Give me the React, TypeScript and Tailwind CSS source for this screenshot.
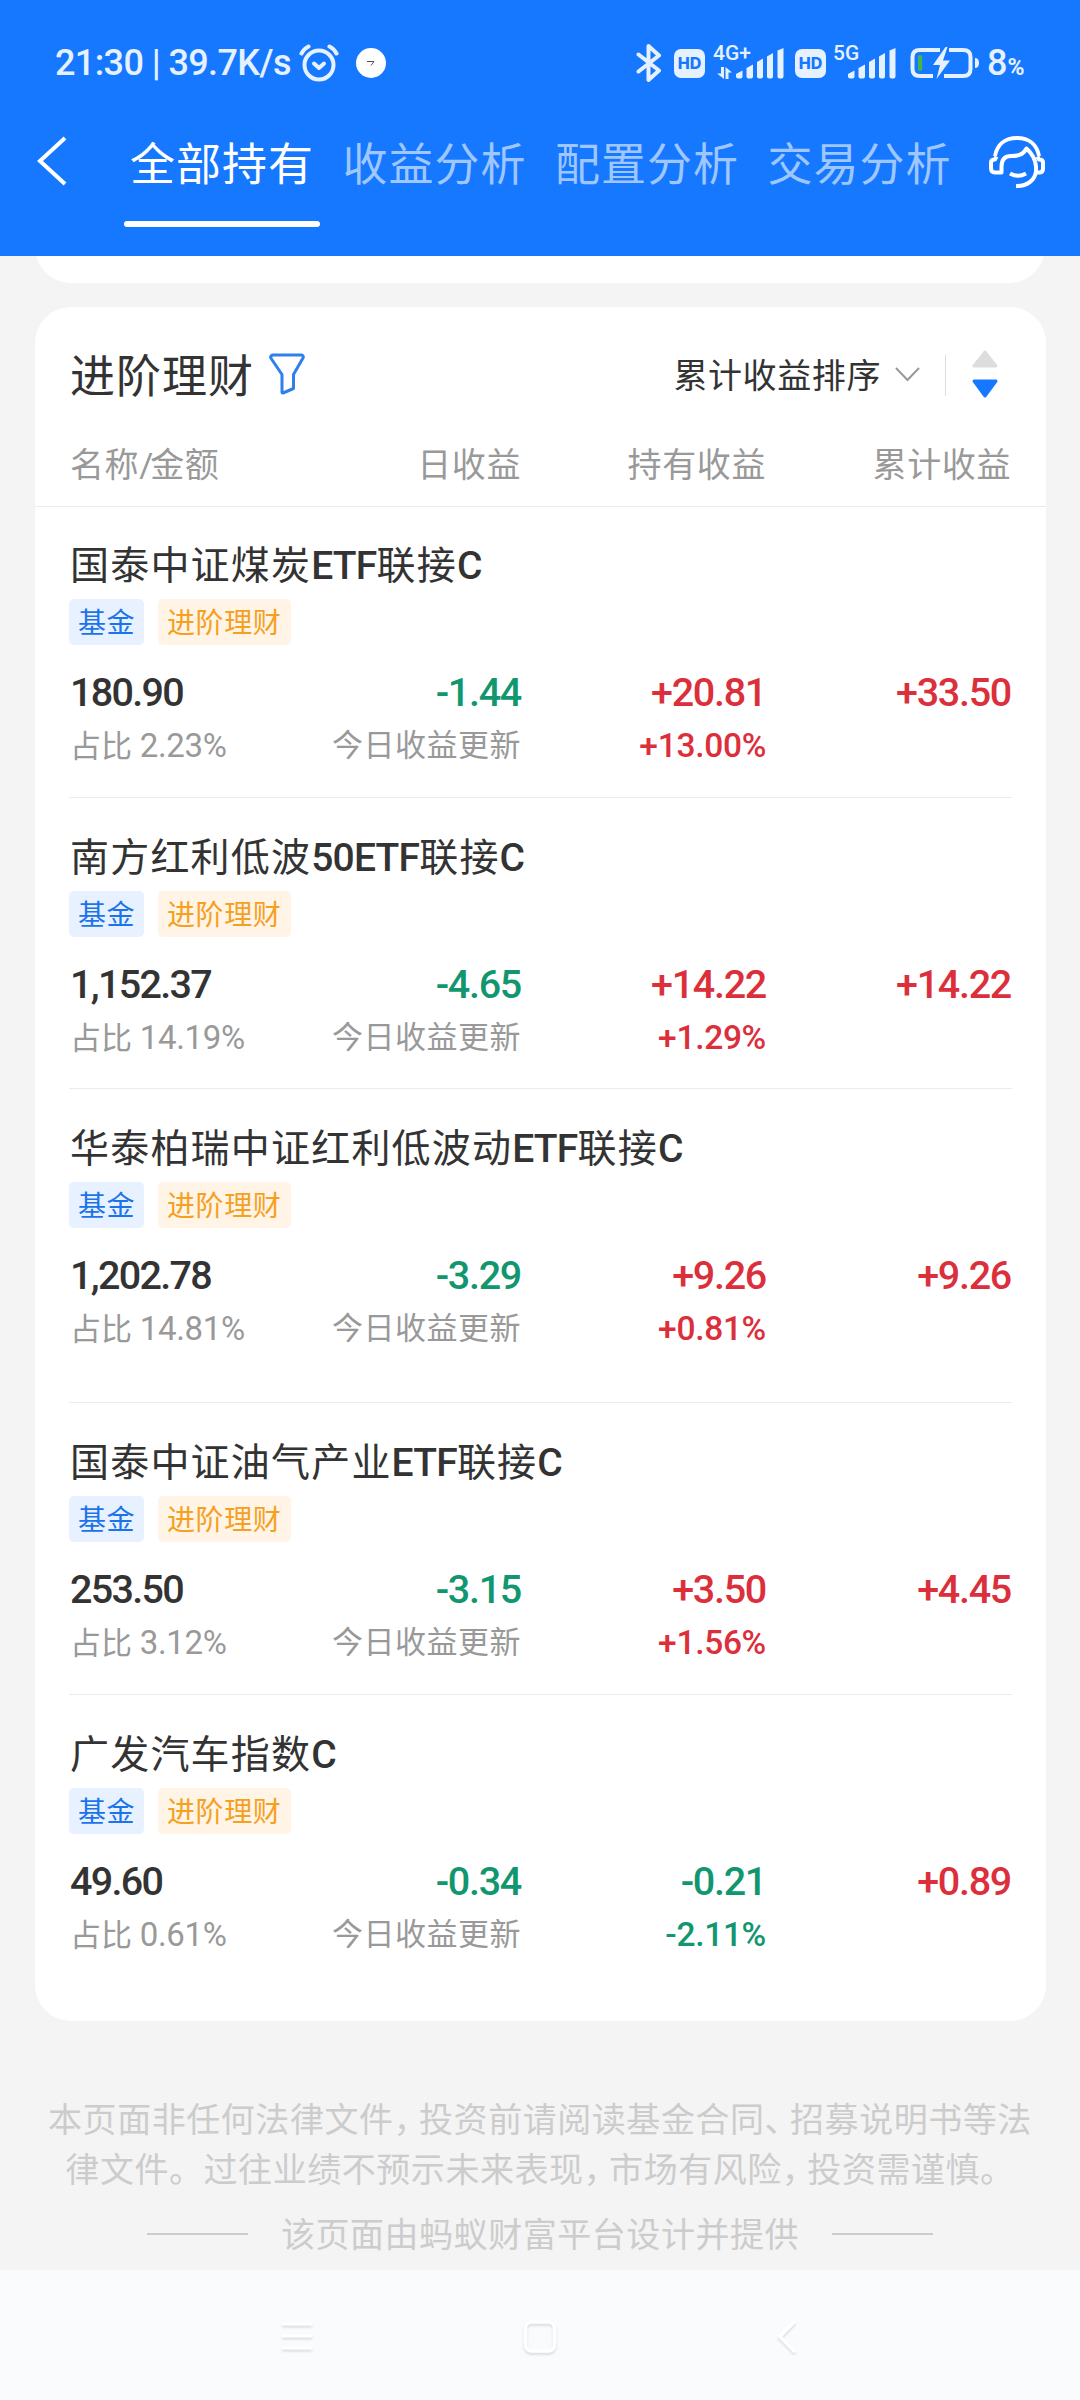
import React from "react";

const FONT = "font-['Roboto','Noto_Sans_CJK_SC',sans-serif]";

const tabs = ["全部持有", "收益分析", "配置分析", "交易分析"];

const funds = [
  {
    name: "国泰中证煤炭ETF联接C",
    amount: "180.90",
    ratio: "2.23%",
    daily: "-1.44",
    holding: "+20.81",
    holdingRate: "+13.00%",
    total: "+33.50",
    height: "h-[292px]",
  },
  {
    name: "南方红利低波50ETF联接C",
    amount: "1,152.37",
    ratio: "14.19%",
    daily: "-4.65",
    holding: "+14.22",
    holdingRate: "+1.29%",
    total: "+14.22",
    height: "h-[291px]",
  },
  {
    name: "华泰柏瑞中证红利低波动ETF联接C",
    amount: "1,202.78",
    ratio: "14.81%",
    daily: "-3.29",
    holding: "+9.26",
    holdingRate: "+0.81%",
    total: "+9.26",
    height: "h-[314px]",
  },
  {
    name: "国泰中证油气产业ETF联接C",
    amount: "253.50",
    ratio: "3.12%",
    daily: "-3.15",
    holding: "+3.50",
    holdingRate: "+1.56%",
    total: "+4.45",
    height: "h-[292px]",
  },
  {
    name: "广发汽车指数C",
    amount: "49.60",
    ratio: "0.61%",
    daily: "-0.34",
    holding: "-0.21",
    holdingRate: "-2.11%",
    total: "+0.89",
    height: "h-[325px]",
  },
];

type Fund = (typeof funds)[number];

const colorOf = (value: string) => (value.startsWith("-") ? "text-[#11966f]" : "text-[#dc2f3c]");

// Latin letters and digits sit tighter and heavier than the Chinese characters
const MixedName = ({ text }: { text: string }) => (
  <>
    {text.split(/([A-Z0-9]+)/).map((part, i) =>
      i % 2 ? (
        <span key={i} className="font-medium tracking-[-0.8px]">
          {part}
        </span>
      ) : (
        part
      ),
    )}
  </>
);

// commas take less than a full character cell
const Compact = ({ text }: { text: string }) => (
  <>
    {text.split(/([，、])/).map((part, i) =>
      i % 2 ? (
        <span key={i} className="tracking-[-8.5px]">
          {part}
        </span>
      ) : (
        part
      ),
    )}
  </>
);

const AlarmIcon = () => (
  <svg width="40" height="38" viewBox="0 0 40 38" fill="none" stroke="#e6f1ff" strokeLinecap="round">
    <circle cx="20" cy="21" r="14.5" strokeWidth="4" />
    <path d="M15 19.5l5 4.5 5-4.5" strokeWidth="4" strokeLinejoin="round" />
    <path d="M2.5 9.5C4 6.5 6.5 4 9.5 2.5M37.500 9.500C36 6.500 33.500 4 30.500 2.500" strokeWidth="4" />
  </svg>
);

const BluetoothIcon = () => (
  <svg width="26" height="40" viewBox="0 0 26 40" fill="none" stroke="#e6f1ff" strokeWidth="4">
    <path d="M2.5 11.500L23 27.500 12.500 37V3L23 12.500 2.500 28.500" strokeLinejoin="round" strokeLinecap="round" />
  </svg>
);

const HdBadge = () => (
  <div className="flex h-[29px] w-[31px] items-center justify-center rounded-[7px] bg-[#e6f1ff] font-['Inter',sans-serif] text-[16px] leading-none font-extrabold text-[#1677ff]">
    HD
  </div>
);

const SignalBars = () => (
  <svg width="48" height="31" viewBox="0 0 48 31" fill="#e6f1ff">
    <path d="M0 26l6.5-3.5v6q0 2-2 2H2q-2 0-2-2z" />
    <path d="M10.500 20l6.500-3.500v12q0 2-2 2h-2.500q-2 0-2-2z" />
    <path d="M21 14l6-3.500v18q0 2-2 2h-2q-2 0-2-2z" />
    <path d="M31 8.500l6-3.500v23.500q0 2-2 2h-2q-2 0-2-2z" />
    <path d="M41.500 2.500l6-2.500v28.500q0 2-2 2h-2q-2 0-2-2z" />
  </svg>
);

const BatteryIcon = () => (
  <svg width="69" height="32" viewBox="0 0 69 32" fill="none">
    <path d="M30 3H10Q2.500 3 2.500 10v12Q2.500 29 10 29h13M39 3h14q7.500 0 7.500 7v12q0 7-7.500 7H34" stroke="#e6f1ff" strokeWidth="4" />
    <rect x="8" y="8" width="4.200" height="16" rx="2" fill="#43b649" />
    <path d="M35.500 0L23 18h7l-3.500 14L40 13.500h-7L37.500 0z" fill="#e6f1ff" />
    <path d="M65 11q4 0 4 5t-4 5z" fill="#e6f1ff" />
  </svg>
);

const ServiceIcon = () => (
  <svg width="58" height="54" viewBox="0 0 58 54" fill="none" stroke="#fff" strokeWidth="4">
    <path d="M7 21C9 9.500 17 3 29 3s20 6.500 22 18" />
    <path d="M8.500 21.500L7 24.500Q3 24.500 3 27.500V33q0 4.500 4 4.500h6.500V32C13.500 24 17 21 23 21c7 0 12-1 15.500-7.500 5.500 5 9 11 9.500 18v6h3.500q3.500 0 3.500-4v-6q0-3-4-3l-1.500-3" strokeLinejoin="round" />
    <path d="M22 38.500q8 4.500 16 0" />
    <path d="M48 36.500c-1 8-8 15-20 14.500" />
  </svg>
);

const StatusBar = () => (
  <div className="flex h-[126px] items-center pl-[55px] text-[#e6f1ff]">
    <span className="w-[240px] text-[36px] leading-none font-medium tracking-[-0.6px] whitespace-nowrap">
      21:30 | 39.7K/s
    </span>
    <div className="ml-[4px]">
      <AlarmIcon />
    </div>
    <div className="ml-[17px] flex size-[30px] items-center justify-center rounded-full bg-white">
      <svg width="8" height="6" viewBox="0 0 8 6" fill="none" stroke="#555" strokeWidth="1">
        <path d="M0 1.500h7L4 5.500" />
      </svg>
    </div>
    <div className="ml-[250px]">
      <BluetoothIcon />
    </div>
    <div className="ml-[12px]">
      <HdBadge />
    </div>
    <div className="ml-[8px] flex h-[38px] w-[72px] flex-col">
      <span className="h-[18px] text-[21px] leading-[18px] font-medium">4G+</span>
      <svg className="mt-[5px] ml-[4px]" width="15" height="12" viewBox="0 0 15 12" fill="#e6f1ff">
        <path d="M4 0h3v12L0 6.500h4zM8.500 0L15 5.500h-3.500V12h-3z" />
      </svg>
    </div>
    <div className="-ml-[49px]">
      <SignalBars />
    </div>
    <div className="ml-[11px]">
      <HdBadge />
    </div>
    <span className="-mt-[20px] ml-[7px] w-[27px] text-[21px] leading-[18px] font-medium">5G</span>
    <div className="-ml-[12px]">
      <SignalBars />
    </div>
    <div className="ml-[14px]">
      <BatteryIcon />
    </div>
    <span className="ml-[8px] flex items-baseline leading-none font-medium">
      <span className="text-[36px]">8</span>
      <span className="text-[23px] font-bold">%</span>
    </span>
  </div>
);

const Header = () => (
  <header className="h-[256px] bg-[#1677ff]">
    <StatusBar />
    <div className="flex h-[130px] pl-[37px]">
      <svg className="mt-[10px]" width="31" height="50" viewBox="0 0 31 50" fill="none" stroke="#fff" strokeWidth="4">
        <path d="M28 2L3 25l25 23" />
      </svg>
      <nav className="ml-[56px] flex gap-[16.500px]">
        {tabs.map((tab, i) => (
          <div key={tab} className="flex w-[196px] flex-col items-center">
            <span
              className={`mt-[8px] h-[64px] text-[45px] leading-[64px] tracking-[1px] whitespace-nowrap ${
                i === 0 ? "text-white" : "text-[#9ec6ff]"
              }`}
            >
              {tab}
            </span>
            {i === 0 && <div className="mt-[23px] h-[6px] w-[196px] rounded-full bg-white" />}
          </div>
        ))}
      </nav>
      <div className="mt-[9px] ml-[30px]">
        <ServiceIcon />
      </div>
    </div>
  </header>
);

const CardHeader = () => (
  <div className="flex h-[137px] items-center pr-[47px] pl-[35px]">
    <h2 className="mt-[4px] text-[45px] leading-[64px] tracking-[1px]">进阶理财</h2>
    <svg className="-mt-[4px] ml-[15px]" width="36" height="42" viewBox="0 0 36 42" fill="none" stroke="#2f80ed" strokeWidth="3">
      <path d="M3.500 2h29q2.500 1 1.500 3L24.500 21.500v14l-10.500 4.500q-1 0-1-1V21.500L1.800 5Q1 3 3.500 2z" strokeLinejoin="round" />
    </svg>
    <div className="ml-auto flex items-center">
      <span className="text-[34px] leading-[48px] tracking-[0.6px]">累计收益排序</span>
      <svg className="-mt-[3px] ml-[14px]" width="25" height="15" viewBox="0 0 25 15" fill="none" stroke="#999" strokeWidth="2">
        <path d="M1 1l11.500 12L24 1" />
      </svg>
      <div className="ml-[25px] h-[41px] w-px bg-[#ddd]" />
      <svg className="-mt-[4px] ml-[25px]" width="28" height="50" viewBox="0 0 28 50">
        <path d="M3 17L14 3l11 14z" fill="#ddd" stroke="#ddd" strokeWidth="3" strokeLinejoin="round" />
        <path d="M3 32l11 15 11-15z" fill="#1677ff" stroke="#1677ff" strokeWidth="3" strokeLinejoin="round" />
      </svg>
    </div>
  </div>
);

const GRID = "grid grid-cols-[206px_245px_245px_245px] pl-[35px]";

const FundRow = ({ fund, last }: { fund: Fund; last: boolean }) => (
  <div className={`flex flex-col pt-[34px] ${fund.height}`}>
    <h3 className="pl-[35px] text-[39px] leading-[50px] tracking-[1.2px] whitespace-nowrap">
      <MixedName text={fund.name} />
    </h3>
    <div className="mt-[8px] flex gap-[14px] pl-[34px] text-[28px] leading-[49px] tracking-[0.6px]">
      <span className="h-[46px] w-[75px] rounded-[5px] bg-[#e7f1ff] pl-[9px] text-[#1b74ea]">基金</span>
      <span className="h-[46px] w-[133px] rounded-[5px] bg-[#fff4e6] pl-[9px] text-[#f5a01f]">进阶理财</span>
    </div>
    <div className={`${GRID} mt-[24px] h-[48px] text-right text-[39.5px] leading-[48px] font-medium tracking-[-1.3px]`}>
      <span className="text-left tracking-[-1.7px]">{fund.amount}</span>
      <span className={colorOf(fund.daily)}>{fund.daily}</span>
      <span className={colorOf(fund.holding)}>{fund.holding}</span>
      <span className={colorOf(fund.total)}>{fund.total}</span>
    </div>
    <div className={`${GRID} mt-[5px] h-[48px] text-right text-[31px] leading-[48px] text-[#999]`}>
      <span className="text-left whitespace-nowrap">
        占比 <span className="text-[33px] tracking-[-0.3px]">{fund.ratio}</span>
      </span>
      <span className="tracking-[0.5px]">今日收益更新</span>
      <span className={`text-[33.5px] font-medium tracking-[-0.3px] ${colorOf(fund.holdingRate)}`}>
        {fund.holdingRate}
      </span>
    </div>
    {!last && <div className="mx-[34px] mt-auto mb-px h-px shrink-0 bg-[#ebebeb]" />}
  </div>
);

const Disclaimer = () => (
  <footer className="h-[249px] pt-[74px] text-center text-[34px] leading-[50px] tracking-[0.55px] text-[#ccc]">
    <p className="whitespace-nowrap">
      <Compact text="本页面非任何法律文件，投资前请阅读基金合同、招募说明书等法" />
    </p>
    <p className="whitespace-nowrap">
      <Compact text="律文件。过往业绩不预示未来表现，市场有风险，投资需谨慎。" />
    </p>
    <div className="mt-[15px] flex items-center justify-center">
      <div className="mb-[3px] h-[2px] w-[101px] bg-[#ccc]" />
      <span className="mx-[33px]">该页面由蚂蚁财富平台设计并提供</span>
      <div className="mb-[3px] h-[2px] w-[101px] bg-[#ccc]" />
    </div>
  </footer>
);

const SystemNav = () => (
  <div className="flex h-[130px] items-center bg-[#fafbfd] pt-[3px] pl-[279px]">
    <svg className="drop-shadow-[0_2px_1px_rgba(0,0,0,0.12)]" width="36" height="36" viewBox="0 0 36 36" stroke="#fff" strokeWidth="3">
      <path d="M3 5h30M3 17h30M3 29h30" />
    </svg>
    <svg className="ml-[207px] drop-shadow-[0_2px_1px_rgba(0,0,0,0.12)]" width="36" height="36" viewBox="0 0 36 36" fill="none" stroke="#fff" strokeWidth="3.500">
      <rect x="3.500" y="3" width="29" height="29" rx="6" />
    </svg>
    <svg className="ml-[218px] drop-shadow-[0_2px_1px_rgba(0,0,0,0.12)]" width="22" height="36" viewBox="0 0 22 36" fill="none" stroke="#fff" strokeWidth="3.500">
      <path d="M19 2L4 17.500 19 33" />
    </svg>
  </div>
);

const App = () => {
  return (
    <main className={`flex h-[2400px] w-[1080px] flex-col overflow-hidden bg-[#f4f4f4] text-[#333] ${FONT}`}>
      <Header />
      <div className="overflow-hidden px-[35px]">
        <div className="-mt-[20px] h-[47px] rounded-b-[36px] bg-white" />
      </div>
      <section className="mx-[35px] mt-[24px] h-[1714px] w-[1011px] rounded-[36px] bg-white">
        <CardHeader />
        <div className={`${GRID} h-[63px] border-b border-[#ebebeb] text-right text-[34px] leading-[43px] tracking-[0.6px] text-[#999]`}>
          <span className="text-left">
            名称<span className="tracking-[-3px]">/</span>金额
          </span>
          <span>日收益</span>
          <span>持有收益</span>
          <span>累计收益</span>
        </div>
        {funds.map((fund, i) => (
          <FundRow key={fund.name} fund={fund} last={i === funds.length - 1} />
        ))}
      </section>
      <Disclaimer />
      <SystemNav />
    </main>
  );
};

export default App;
